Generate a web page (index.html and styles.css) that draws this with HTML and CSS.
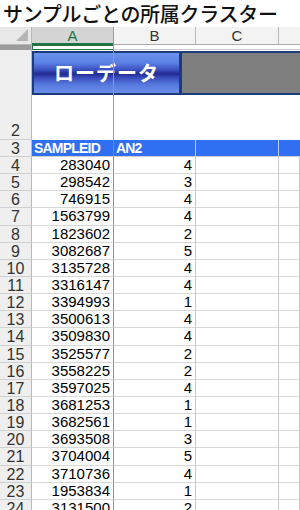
FILE: index.html
```html
<!DOCTYPE html>
<html lang="ja">
<head>
<meta charset="utf-8">
<title>サンプルごとの所属クラスター</title>
<link rel="stylesheet" href="styles.css">
</head>
<body>
<h1 class="title">サンプルごとの所属クラスター</h1>
<div class="sheet">
  <div class="grid">
    <div class="corner"><span class="corner-tri"></span></div>
    <div class="colhead sel">A</div>
    <div class="colhead">B</div>
    <div class="colhead">C</div>
    <div class="colhead last"></div>

    <div class="rowhead r1"></div>
    <div class="cell r1 a1"></div>
    <div class="cell r1 plain"></div>
    <div class="cell r1 plain"></div>
    <div class="cell r1 plain"></div>

    <div class="rowhead r2">2</div>
    <div class="cell r2 fz"></div>
    <div class="cell r2 blank"></div>
    <div class="cell r2 blank"></div>
    <div class="cell r2 blank"></div>

    <div class="rowhead">3</div>
    <div class="cell hd fz">SAMPLEID</div>
    <div class="cell hd">AN2</div>
    <div class="cell hd"></div>
    <div class="cell hd last"></div>

    <div class="rowhead">4</div><div class="cell num fz">283040</div><div class="cell num">4</div><div class="cell"></div><div class="cell"></div>
    <div class="rowhead">5</div><div class="cell num fz">298542</div><div class="cell num">3</div><div class="cell"></div><div class="cell"></div>
    <div class="rowhead">6</div><div class="cell num fz">746915</div><div class="cell num">4</div><div class="cell"></div><div class="cell"></div>
    <div class="rowhead">7</div><div class="cell num fz">1563799</div><div class="cell num">4</div><div class="cell"></div><div class="cell"></div>
    <div class="rowhead">8</div><div class="cell num fz">1823602</div><div class="cell num">2</div><div class="cell"></div><div class="cell"></div>
    <div class="rowhead">9</div><div class="cell num fz">3082687</div><div class="cell num">5</div><div class="cell"></div><div class="cell"></div>
    <div class="rowhead">10</div><div class="cell num fz">3135728</div><div class="cell num">4</div><div class="cell"></div><div class="cell"></div>
    <div class="rowhead">11</div><div class="cell num fz">3316147</div><div class="cell num">4</div><div class="cell"></div><div class="cell"></div>
    <div class="rowhead">12</div><div class="cell num fz">3394993</div><div class="cell num">1</div><div class="cell"></div><div class="cell"></div>
    <div class="rowhead">13</div><div class="cell num fz">3500613</div><div class="cell num">4</div><div class="cell"></div><div class="cell"></div>
    <div class="rowhead">14</div><div class="cell num fz">3509830</div><div class="cell num">4</div><div class="cell"></div><div class="cell"></div>
    <div class="rowhead">15</div><div class="cell num fz">3525577</div><div class="cell num">2</div><div class="cell"></div><div class="cell"></div>
    <div class="rowhead">16</div><div class="cell num fz">3558225</div><div class="cell num">2</div><div class="cell"></div><div class="cell"></div>
    <div class="rowhead">17</div><div class="cell num fz">3597025</div><div class="cell num">4</div><div class="cell"></div><div class="cell"></div>
    <div class="rowhead">18</div><div class="cell num fz">3681253</div><div class="cell num">1</div><div class="cell"></div><div class="cell"></div>
    <div class="rowhead">19</div><div class="cell num fz">3682561</div><div class="cell num">1</div><div class="cell"></div><div class="cell"></div>
    <div class="rowhead">20</div><div class="cell num fz">3693508</div><div class="cell num">3</div><div class="cell"></div><div class="cell"></div>
    <div class="rowhead">21</div><div class="cell num fz">3704004</div><div class="cell num">5</div><div class="cell"></div><div class="cell"></div>
    <div class="rowhead">22</div><div class="cell num fz">3710736</div><div class="cell num">4</div><div class="cell"></div><div class="cell"></div>
    <div class="rowhead">23</div><div class="cell num fz">1953834</div><div class="cell num">1</div><div class="cell"></div><div class="cell"></div>
    <div class="rowhead">24</div><div class="cell num fz">3131500</div><div class="cell num">2</div><div class="cell"></div><div class="cell"></div>
  </div>

  <div class="shape-btn">ローデータ</div>
  <div class="shape-gray"></div>
  <div class="freeze"></div>
</div>
</body>
</html>
```

FILE: styles.css
```css
html, body {
  margin: 0;
  padding: 0;
  background: #ffffff;
}
body {
  width: 300px;
  height: 510px;
  overflow: hidden;
}
.title {
  margin: 0;
  padding-left: 3px;
  font-family: "Noto Sans CJK JP", "Noto Sans", sans-serif;
  font-size: 20px;
  font-weight: 500;
  line-height: 27px;
  color: #111;
  white-space: nowrap;
  letter-spacing: -0.3px;
}
.sheet {
  position: relative;
  width: 300px;
  overflow: hidden;
}
.grid {
  display: grid;
  grid-template-columns: 32px 82px 82px 83px 21px;
  grid-template-rows: 18px 5px 90px 17px repeat(21, 17.15px);
  font-family: "Liberation Sans", Arial, sans-serif;
}
.corner {
  position: relative;
  background: #e8e8e8;
  border-right: 1px solid #b8b8b8;
  border-bottom: 1px solid #b8b8b8;
  box-sizing: border-box;
}
.corner-tri {
  position: absolute;
  right: 3px;
  bottom: 3px;
  width: 0;
  height: 0;
  border-left: 12px solid transparent;
  border-bottom: 12px solid #b5b5b5;
}
.colhead {
  background: #f3f3f3;
  border-right: 1px solid #b8b8b8;
  border-bottom: 1px solid #ababab;
  box-sizing: border-box;
  font-size: 15px;
  color: #333;
  text-align: center;
  line-height: 17px;
}
.colhead.sel {
  background: #d4d4d4;
  color: #217346;
  border-bottom: 2px solid #217346;
  border-right: 1px solid #9a9a9a;
}
.colhead.last {
  border-right: none;
}
.rowhead {
  background: #efefef;
  border-right: 1px solid #b8b8b8;
  border-bottom: 1px solid #d0d0d0;
  box-sizing: border-box;
  font-size: 16px;
  color: #333;
  text-align: center;
  line-height: 17px;
  overflow: hidden;
}
.rowhead.r1 {
  background: #9c9c9c;
  border-bottom: none;
}
.rowhead.r2 {
  display: flex;
  align-items: flex-end;
  justify-content: center;
}
.cell {
  border-right: 1px solid #c8c8c8;
  border-bottom: 1px solid #d8d8d8;
  box-sizing: border-box;
  font-size: 15px;
  color: #000;
  line-height: 16px;
  white-space: nowrap;
  overflow: hidden;
}
.cell.fz {
  border-right: 1px solid #8f8f8f;
}
.cell.r1 {
  border-right: none;
  border-bottom: 1px solid #c8c8c8;
}
.cell.a1 {
  border: 1px solid #217346;
}
.cell.r2 {
  border-bottom: none;
}
.cell.blank {
  border-right: none;
}
.cell.num {
  text-align: right;
  padding-right: 3px;
}
.cell.hd {
  background: #2f6ff0;
  color: #fff;
  font-size: 14px;
  font-weight: bold;
  letter-spacing: -0.8px;
  line-height: 17px;
  padding-left: 2px;
  border-right: 1px solid #b9cdf5;
  border-bottom: 1px solid #d0d0d0;
}
.cell.hd.fz {
  border-right: 1px solid #7d8aa5;
}
.cell.hd.last {
  border-right: none;
}
.shape-btn {
  position: absolute;
  left: 32px;
  top: 24px;
  width: 149px;
  height: 44px;
  box-sizing: border-box;
  border: 2px solid #1c3b7a;
  background: linear-gradient(to bottom,
    #6c93ee 0%,
    #5a80e4 25%,
    #3b4fc0 42%,
    #242a90 52%,
    #3a4dbd 62%,
    #5577dd 78%,
    #6a8fea 100%);
  color: #ffffff;
  font-family: "Noto Sans CJK JP", "Noto Sans", sans-serif;
  font-size: 20px;
  font-weight: bold;
  text-align: center;
  line-height: 39px;
  letter-spacing: 1px;
}
.shape-gray {
  position: absolute;
  left: 180px;
  top: 24px;
  width: 122px;
  height: 44px;
  box-sizing: border-box;
  border: 2px solid #1c3b7a;
  background: #7f7f7f;
}
.freeze {
  position: absolute;
  left: 113px;
  top: 0;
  width: 1px;
  height: 113px;
  background: #9a9a9a;
}
```
